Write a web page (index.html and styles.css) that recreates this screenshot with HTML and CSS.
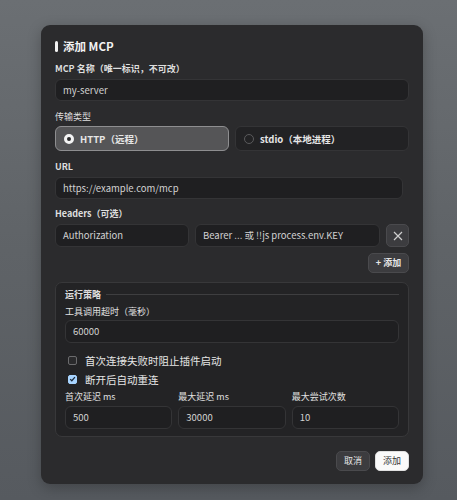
FILE: index.html
```html
<!DOCTYPE html>
<html lang="zh">
<head>
<meta charset="utf-8">
<link rel="stylesheet" href="styles.css">
</head>
<body>
<div class="modal">
  <div class="title"><span class="bar"></span>添加 MCP</div>

  <div class="field">
    <div class="label">MCP 名称（唯一标识，不可改）</div>
    <div class="input">my-server</div>
  </div>

  <div class="field f2">
    <div class="label light">传输类型</div>
    <div class="radios">
      <div class="radio on"><span class="dot"></span>HTTP（远程）</div>
      <div class="radio"><span class="dot"></span>stdio（本地进程）</div>
    </div>
  </div>

  <div class="field f2">
    <div class="label">URL</div>
    <div class="input url">https://example.com/mcp</div>
  </div>

  <div class="field f3">
    <div class="label">Headers（可选）</div>
    <div class="hrow">
      <div class="input key">Authorization</div>
      <div class="input val">Bearer ... 或 !!js process.env.KEY</div>
      <div class="xbtn"><svg width="10" height="10" viewBox="0 0 10 10"><path d="M1 1L9 9M9 1L1 9" stroke="#cfcfcf" stroke-width="1.2" fill="none"/></svg></div>
    </div>
    <div class="addrow"><div class="btn small">+ 添加</div></div>
  </div>

  <div class="section">
    <div class="legend"><span>运行策略</span><i></i></div>
    <div class="label">工具调用超时（毫秒）</div>
    <div class="input in2">60000</div>
    <div class="check"><span class="box"></span>首次连接失败时阻止插件启动</div>
    <div class="check c2"><span class="box on"><svg width="8" height="8" viewBox="0 0 8 8"><path d="M1.3 4.2L3.2 6L6.8 1.8" stroke="#1b2a3a" stroke-width="1.4" fill="none"/></svg></span>断开后自动重连</div>
    <div class="grid3">
      <div><div class="label">首次延迟 ms</div><div class="input in2">500</div></div>
      <div><div class="label">最大延迟 ms</div><div class="input in2">30000</div></div>
      <div><div class="label">最大尝试次数</div><div class="input in2">10</div></div>
    </div>
  </div>

  <div class="footer">
    <div class="btn">取消</div>
    <div class="btn primary">添加</div>
  </div>
</div>
</body>
</html>
```
FILE: styles.css
```css
* { box-sizing: border-box; }
html, body { height: 100%; }
body {
  margin: 0;
  padding: 25px 34px 0 41px;
  background: linear-gradient(180deg, #6b6f73 0%, #5f6367 50%, #565a5f 100%);
  font-family: "Noto Sans CJK SC", "Noto Sans", sans-serif;
  color: #e6e6e6;
}
.modal {
  width: 382px;
  height: 459px;
  background: #2b2b2d;
  border-radius: 9px;
  padding: 13px 14px 13px 14px;
  box-shadow: 0 4px 14px rgba(0,0,0,0.25);
}
.title {
  display: flex;
  align-items: center;
  height: 16px;
  font-size: 11.5px;
  font-weight: 700;
  color: #f2f2f2;
}
.bar {
  width: 3px;
  height: 11px;
  background: #f2f2f2;
  border-radius: 2px;
  margin-right: 5px;
}
.field { margin-top: 9px; }
.field.f2 { margin-top: 10px; }
.field.f3 { margin-top: 9px; }
.label {
  height: 12px;
  line-height: 12px;
  font-size: 9px;
  font-weight: 700;
  color: #dedede;
}
.label.light { font-weight: 400; }
.input {
  margin-top: 4px;
  height: 22px;
  line-height: 20px;
  background: #1f1f21;
  border: 1px solid #343436;
  border-radius: 6px;
  padding: 0 7px;
  font-size: 9.5px;
  color: #d2d2d2;
  white-space: nowrap;
  overflow: hidden;
}
.input.url { width: 348px; }
.radios {
  margin-top: 3px;
  display: flex;
  gap: 6px;
}
.radio {
  flex: 1;
  height: 25px;
  display: flex;
  align-items: center;
  padding-left: 8px;
  border-radius: 6px;
  background: #222224;
  border: 1px solid #343436;
  font-size: 9.5px;
  font-weight: 700;
  color: #e6e6e6;
}
.radio.on {
  background: #555557;
  border: 1px solid #8e8e90;
}
.dot {
  width: 10px;
  height: 10px;
  border-radius: 50%;
  border: 1px solid #5a5a5c;
  margin-right: 6px;
}
.radio.on .dot {
  border: 3px solid #f4f4f4;
  background: #2a2a2c;
}
.hrow {
  margin-top: 4px;
  display: flex;
  gap: 6px;
}
.hrow .input { margin-top: 0; height: 23px; line-height: 21px; }
.key { width: 134px; }
.val { flex: 1; }
.xbtn {
  width: 23px;
  height: 23px;
  border-radius: 5px;
  background: #3c3c3f;
  border: 1px solid #4a4a4d;
  display: flex;
  align-items: center;
  justify-content: center;
}
.addrow {
  display: flex;
  justify-content: flex-end;
  margin-top: 6px;
}
.btn {
  height: 20px;
  line-height: 18px;
  padding: 0 7px;
  border-radius: 5px;
  background: #3c3c3f;
  border: 1px solid #4a4a4d;
  font-size: 9px;
  font-weight: 700;
  color: #e6e6e6;
}
.btn.small { width: 41px; padding: 0; text-align: center; }
.section {
  margin-top: 9px;
  height: 155px;
  background: #232325;
  border: 1px solid #38383a;
  border-radius: 7px;
  padding: 5px 9px 0 9px;
}
.legend {
  display: flex;
  align-items: center;
  height: 12px;
  font-size: 9px;
  font-weight: 700;
  color: #dedede;
}
.legend i {
  flex: 1;
  height: 1px;
  background: #3e3e40;
  margin-left: 5px;
}
.section > .label { margin-top: 6px; font-weight: 400; color: #e0e0e0; }
.in2 { margin-top: 2px; height: 23px; line-height: 21px; }
.check {
  display: flex;
  align-items: center;
  height: 16px;
  margin-top: 9px;
  padding-left: 3px;
  font-size: 10.5px;
  color: #e6e6e6;
}
.check.c2 { margin-top: 3px; }
.box {
  width: 9px;
  height: 9px;
  border: 1px solid #6b6b6d;
  border-radius: 2px;
  background: #2a2a2c;
  margin-right: 8px;
  display: flex;
  align-items: center;
  justify-content: center;
}
.box.on {
  background: #a8d4ff;
  border-color: #a8d4ff;
}
.grid3 {
  margin-top: 4px;
  display: grid;
  grid-template-columns: 1fr 1fr 1fr;
  gap: 6px;
}
.grid3 .label { font-weight: 400; color: #e0e0e0; }
.grid3 .in2 { margin-top: 3px; }
.footer {
  display: flex;
  justify-content: flex-end;
  gap: 5px;
  margin-top: 14px;
}
.footer .btn { font-weight: 400; padding: 0; width: 34px; text-align: center; }
.btn.primary {
  background: #fafafa;
  border-color: #e0e0e0;
  color: #333;
}
```
